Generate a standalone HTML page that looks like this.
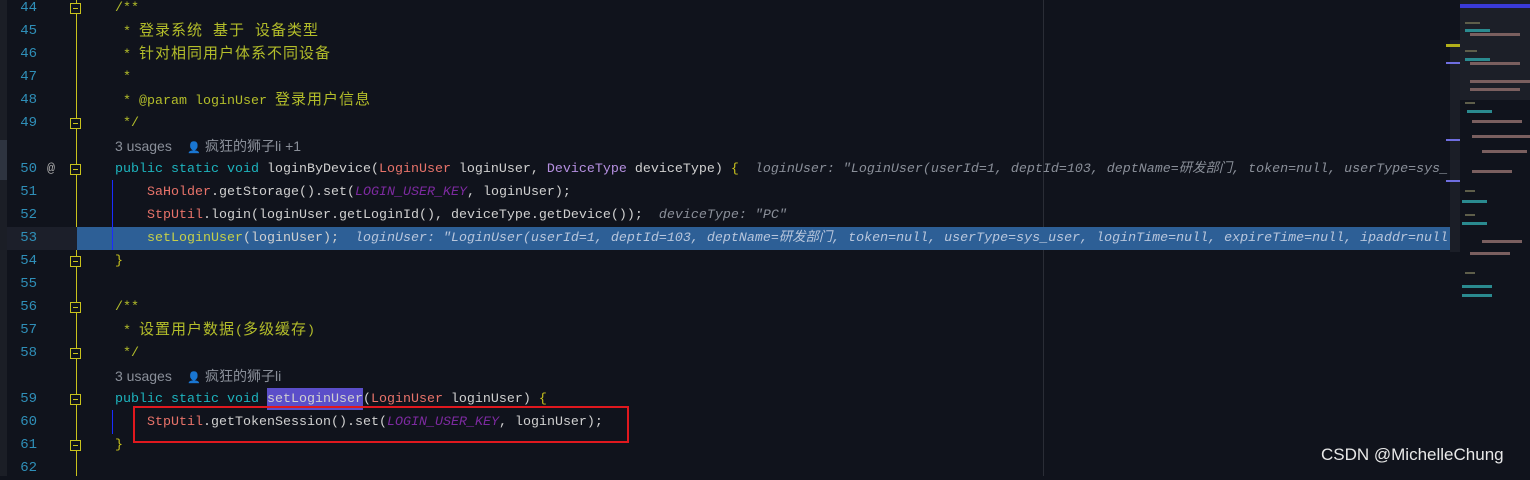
<!DOCTYPE html>
<html><head><meta charset="utf-8"><style>
body{margin:0;width:1530px;height:476px;overflow:hidden;background:#10131c;position:relative;font-family:"Liberation Mono","Noto Sans CJK SC",monospace;font-size:13.33px}
.r{position:absolute;left:0;height:23px;line-height:23px;white-space:pre}
.n{position:absolute;width:37px;text-align:right;color:#2f8fb8;font-size:14px}
.c{position:absolute;left:115px;color:#d0d0d0}
.cm{color:#b3bd2a}
.z{font-size:15px;letter-spacing:1px}
.k{color:#1db3bd}
.m{color:#e8736a}
.t{color:#b58fe0}
.p{color:#7d2aa0;font-style:italic}
.h{color:#8a8f99;font-style:italic}
.u{color:#8a8f99;font-family:"Liberation Sans","Noto Sans CJK SC",sans-serif;font-size:14px}
.y{color:#c9c21c}
.f{position:absolute;left:70px;width:11px;height:11px;border:1px solid #c9c21c;background:#10131c;box-sizing:border-box}
.f:after{content:"";position:absolute;left:2px;top:4px;width:5px;height:1px;background:#c9c21c}
</style></head><body>
<div style="position:absolute;left:0;top:0;width:7px;height:476px;background:#1b1e26"></div>
<div style="position:absolute;left:0;top:140px;width:7px;height:40px;background:#2e3440"></div>
<div style="position:absolute;left:76px;top:0;width:1px;height:476px;background:#c9c21c"></div>
<div style="position:absolute;left:1043px;top:0;width:1px;height:476px;background:#2a2d36"></div>
<div style="position:absolute;left:7px;top:227px;width:70px;height:23px;background:#1c1f2a"></div>
<div style="position:absolute;left:77px;top:227px;width:1383px;height:23px;background:#2d5f96"></div>
<div style="position:absolute;left:112px;top:180px;width:1px;height:70px;background:#1a2cff"></div>
<div style="position:absolute;left:112px;top:410px;width:1px;height:24px;background:#1a2cff"></div>
<div style="position:absolute;left:267px;top:388px;width:96px;height:22px;background:#5b4ec9"></div>
<div style="position:absolute;left:133px;top:406px;width:496px;height:37px;border:2px solid #e0181e;box-sizing:border-box"></div>
<div style="position:absolute;left:1450px;top:40px;width:10px;height:212px;background:#1b1e27"></div>
<div style="position:absolute;left:1446px;top:44px;width:14px;height:3px;background:#b3b01a"></div>
<div style="position:absolute;left:1446px;top:62px;width:14px;height:2px;background:#6f6ee0"></div>
<div style="position:absolute;left:1446px;top:139px;width:14px;height:2px;background:#6f6ee0"></div>
<div style="position:absolute;left:1446px;top:180px;width:14px;height:2px;background:#6f6ee0"></div>
<div style="position:absolute;left:1460px;top:0;width:70px;height:100px;background:#1c1f28"></div>
<div style="position:absolute;left:1460px;top:4px;width:70px;height:4px;background:#3a3ad8"></div>
<svg style="position:absolute;left:1462px;top:10px" width="68" height="300">
<g fill="#2a8a8f"><rect x="3" y="19" width="25" height="3"/><rect x="3" y="48" width="25" height="3"/><rect x="5" y="100" width="25" height="3"/><rect x="0" y="190" width="25" height="3"/><rect x="0" y="212" width="25" height="3"/><rect x="0" y="275" width="30" height="3"/><rect x="0" y="284" width="30" height="3"/></g>
<g fill="#7a5f5f"><rect x="8" y="23" width="50" height="3"/><rect x="8" y="52" width="50" height="3"/><rect x="8" y="70" width="60" height="3"/><rect x="8" y="78" width="50" height="3"/><rect x="10" y="110" width="50" height="3"/><rect x="10" y="125" width="60" height="3"/><rect x="20" y="140" width="45" height="3"/><rect x="10" y="160" width="40" height="3"/><rect x="20" y="230" width="40" height="3"/><rect x="8" y="242" width="40" height="3"/></g>
<g fill="#5e5e4a"><rect x="3" y="12" width="15" height="2"/><rect x="3" y="40" width="12" height="2"/><rect x="3" y="92" width="10" height="2"/><rect x="3" y="180" width="10" height="2"/><rect x="3" y="204" width="10" height="2"/><rect x="3" y="262" width="10" height="2"/></g>
</svg>
<div class="r" style="top:-3px;width:1460px"><span class="n">44</span><span class="c"><span class="cm">/**</span></span></div>
<div class="r" style="top:20px"><span class="n">45</span><span class="c"><span class="cm"> * <span class="z">登录系统 基于 设备类型</span></span></span></div>
<div class="r" style="top:43px"><span class="n">46</span><span class="c"><span class="cm"> * <span class="z">针对相同用户体系不同设备</span></span></span></div>
<div class="r" style="top:66px"><span class="n">47</span><span class="c"><span class="cm"> *</span></span></div>
<div class="r" style="top:89px"><span class="n">48</span><span class="c"><span class="cm"> * @param loginUser <span class="z">登录用户信息</span></span></span></div>
<div class="r" style="top:112px"><span class="n">49</span><span class="c"><span class="cm"> */</span></span></div>
<div class="r" style="top:135px"><span class="c u">3 usages &nbsp;&nbsp; <span style="font-size:11px">&#128100;</span> 疯狂的狮子li +1</span></div>
<div class="r" style="top:158px"><span class="n">50</span><span style="position:absolute;left:47px;color:#aaa">@</span><span class="c"><span class="k">public static void </span>loginByDevice(<span class="m">LoginUser</span> loginUser, <span class="t">DeviceType</span> deviceType) <span class="y">{</span>  <span class="h">loginUser: "LoginUser(userId=1, deptId=103, deptName=研发部门, token=null, userType=sys_</span></span></div>
<div class="r" style="top:181px"><span class="n">51</span><span class="c">    <span class="m">SaHolder</span>.getStorage().set(<span class="p">LOGIN_USER_KEY</span>, loginUser);</span></div>
<div class="r" style="top:204px"><span class="n">52</span><span class="c">    <span class="m">StpUtil</span>.login(loginUser.getLoginId(), deviceType.getDevice());  <span class="h">deviceType: "PC"</span></span></div>
<div class="r" style="top:227px;width:1460px;overflow:hidden"><span class="n">53</span><span class="c">    <span style="color:#c6cf4a">setLoginUser</span>(loginUser);  <span class="h" style="color:#b8c6dc">loginUser: "LoginUser(userId=1, deptId=103, deptName=研发部门, token=null, userType=sys_user, loginTime=null, expireTime=null, ipaddr=null</span></span></div>
<div class="r" style="top:250px"><span class="n">54</span><span class="c"><span class="y">}</span></span></div>
<div class="r" style="top:273px"><span class="n">55</span></div>
<div class="r" style="top:296px"><span class="n">56</span><span class="c"><span class="cm">/**</span></span></div>
<div class="r" style="top:319px"><span class="n">57</span><span class="c"><span class="cm"> * <span class="z">设置用户数据</span>(<span class="z">多级缓存</span>)</span></span></div>
<div class="r" style="top:342px"><span class="n">58</span><span class="c"><span class="cm"> */</span></span></div>
<div class="r" style="top:365px"><span class="c u">3 usages &nbsp;&nbsp; <span style="font-size:11px">&#128100;</span> 疯狂的狮子li</span></div>
<div class="r" style="top:388px"><span class="n">59</span><span class="c"><span class="k">public static void </span>setLoginUser(<span class="m">LoginUser</span> loginUser) <span class="y">{</span></span></div>
<div class="r" style="top:411px"><span class="n">60</span><span class="c">    <span class="m">StpUtil</span>.getTokenSession().set(<span class="p">LOGIN_USER_KEY</span>, loginUser);</span></div>
<div class="r" style="top:434px"><span class="n">61</span><span class="c"><span class="y">}</span></span></div>
<div class="r" style="top:457px"><span class="n">62</span></div>
<div class="f" style="top:3px"></div><div class="f" style="top:118px"></div><div class="f" style="top:164px"></div><div class="f" style="top:256px"></div><div class="f" style="top:302px"></div><div class="f" style="top:348px"></div><div class="f" style="top:394px"></div><div class="f" style="top:440px"></div>
<div style="position:absolute;left:1321px;top:445px;color:#e8e8e8;font-family:'Liberation Sans',sans-serif;font-size:17px">CSDN @MichelleChung</div>
</body></html>
